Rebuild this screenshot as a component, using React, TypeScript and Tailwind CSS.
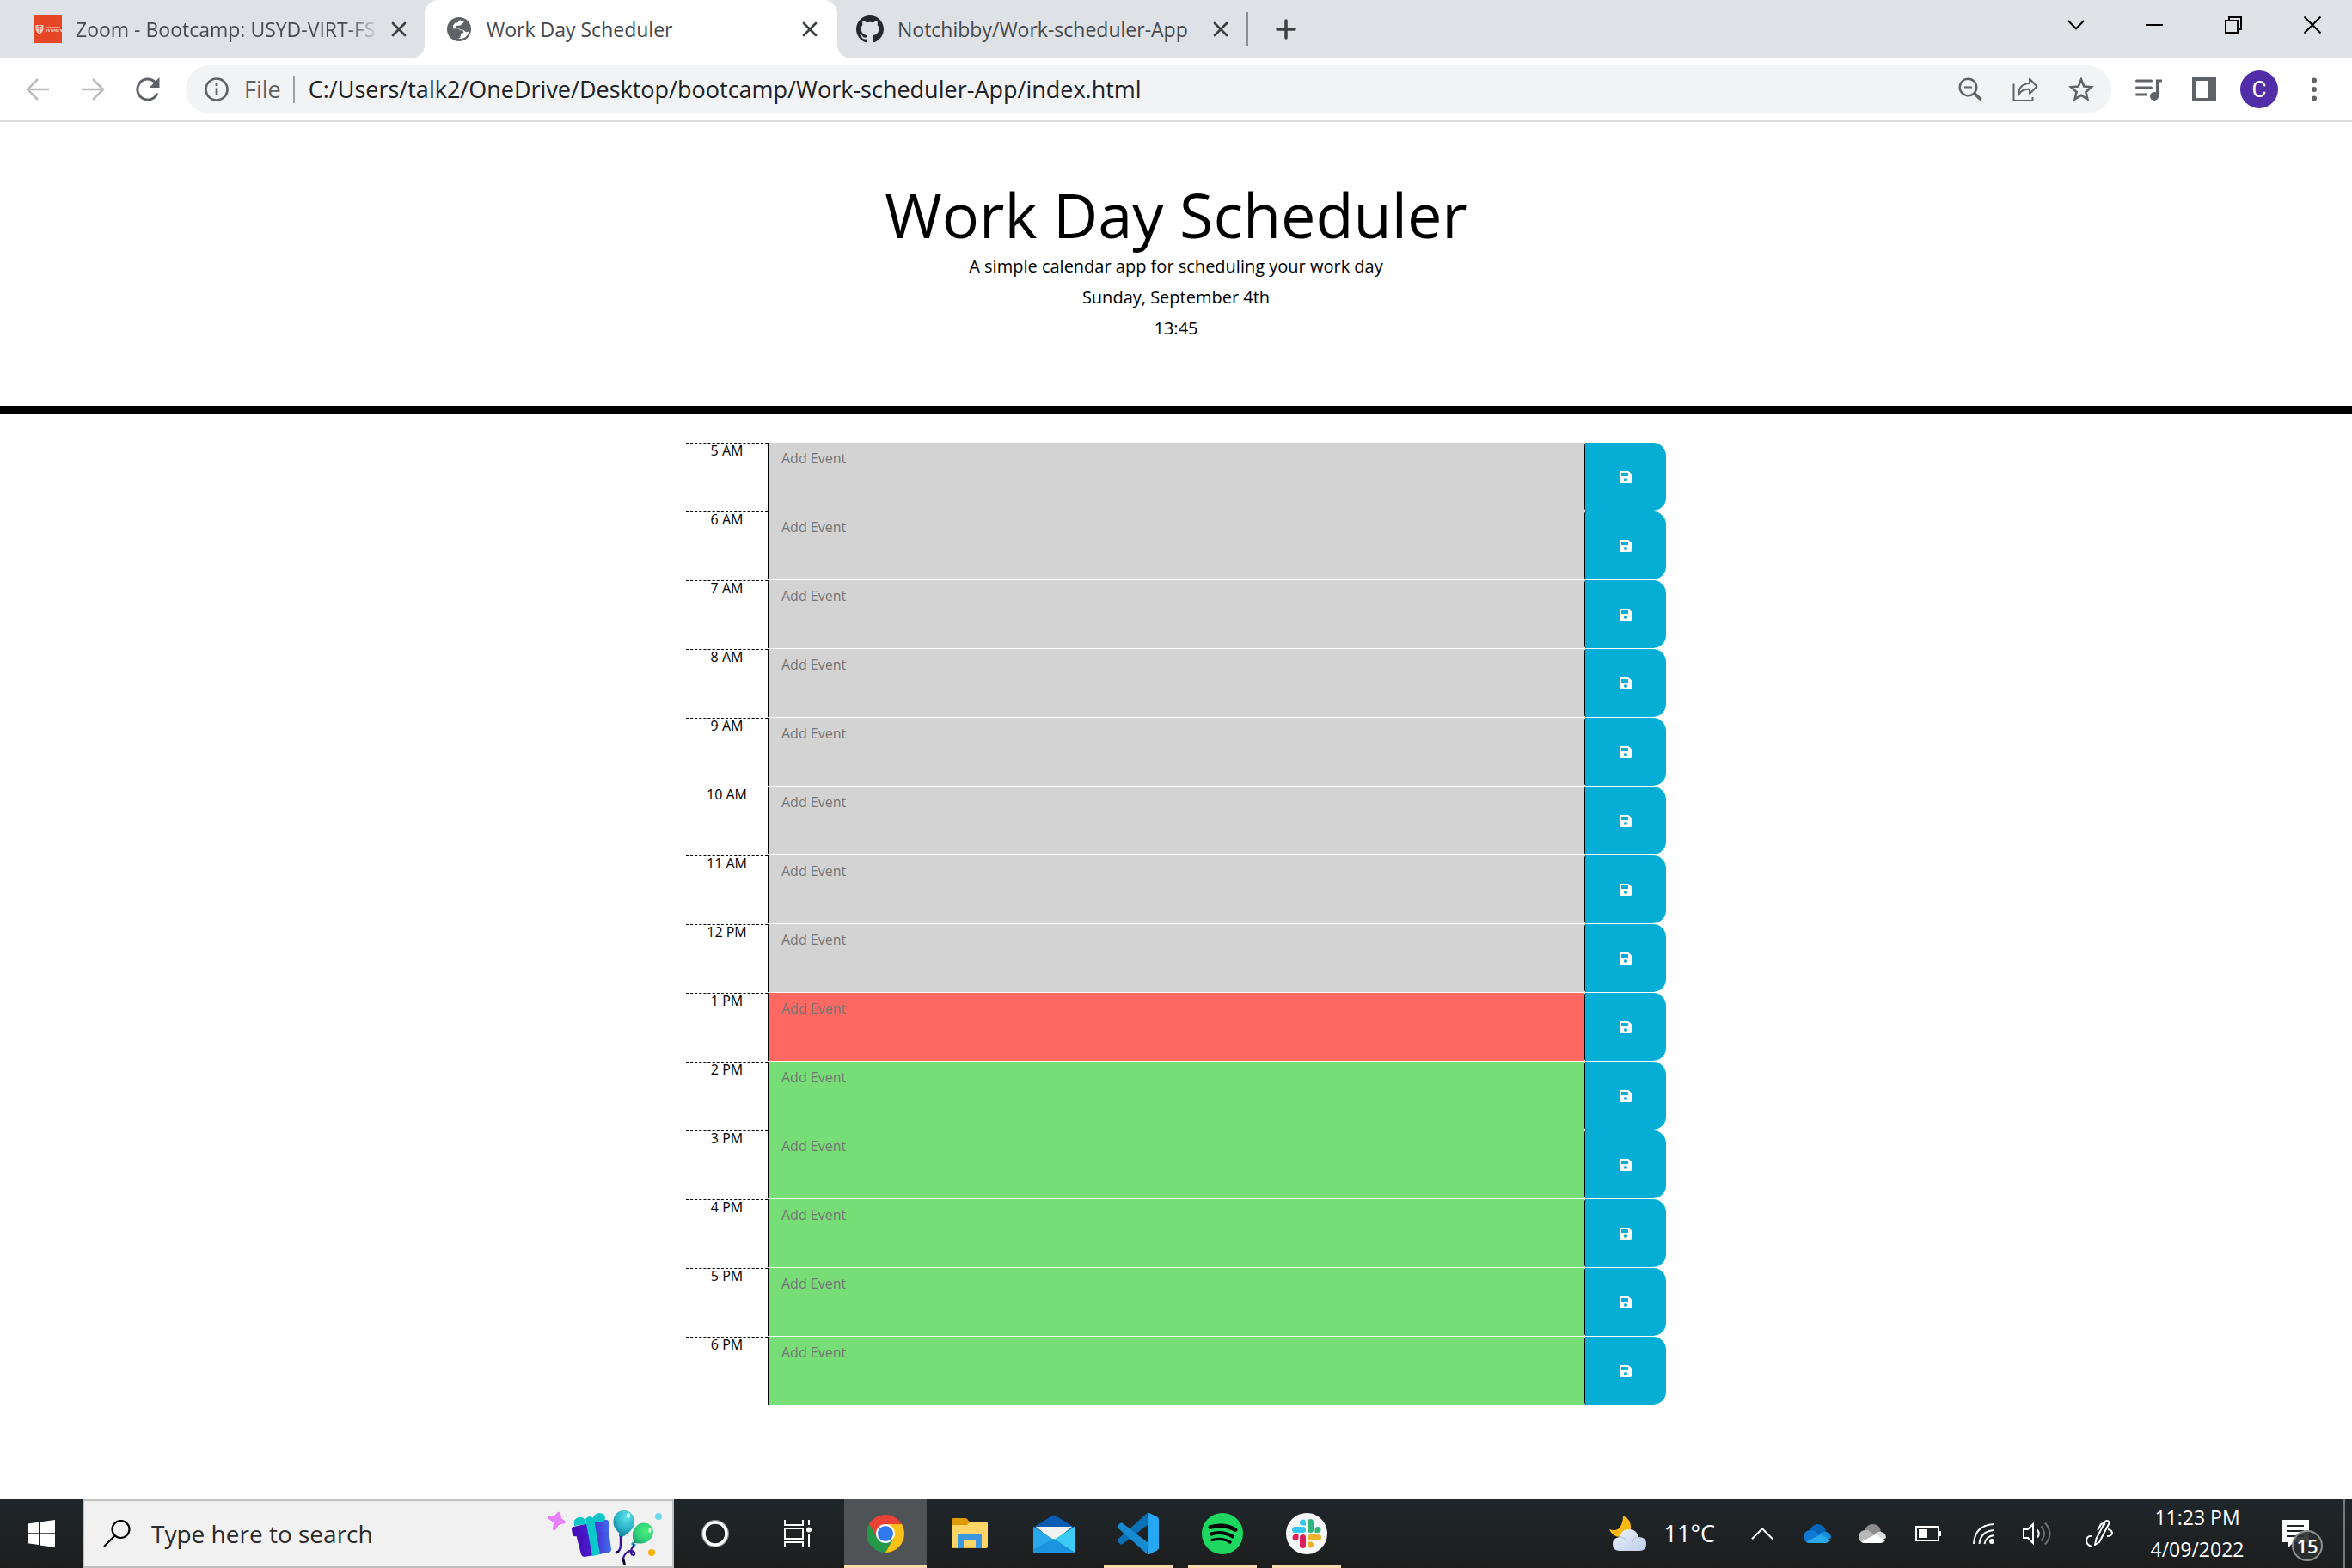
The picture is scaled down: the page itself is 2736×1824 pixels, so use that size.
import React from "react";
import { FaSave } from "react-icons/fa";

const UI = "font-['Open_Sans','Noto_Sans',sans-serif]";

type Phase = "past" | "present" | "future";

const slots: { hour: string; phase: Phase }[] = [
  { hour: "5 AM", phase: "past" },
  { hour: "6 AM", phase: "past" },
  { hour: "7 AM", phase: "past" },
  { hour: "8 AM", phase: "past" },
  { hour: "9 AM", phase: "past" },
  { hour: "10 AM", phase: "past" },
  { hour: "11 AM", phase: "past" },
  { hour: "12 PM", phase: "past" },
  { hour: "1 PM", phase: "present" },
  { hour: "2 PM", phase: "future" },
  { hour: "3 PM", phase: "future" },
  { hour: "4 PM", phase: "future" },
  { hour: "5 PM", phase: "future" },
  { hour: "6 PM", phase: "future" },
];

const phaseColor: Record<Phase, string> = {
  past: "bg-[#d3d3d3]",
  present: "bg-[#ff6961]",
  future: "bg-[#77dd77]",
};

function TabClose({ name }: { name: string }) {
  return (
    <button aria-label={`Close ${name}`} className="flex size-8 shrink-0 items-center justify-center">
      <svg width="18" height="18" viewBox="0 0 18 18" stroke="#3c4043" strokeWidth="2.8" strokeLinecap="round">
        <path d="M2 2l14 14M16 2L2 16" />
      </svg>
    </button>
  );
}

function TabStrip() {
  return (
    <div className="flex h-[68px] items-stretch bg-[#dee1e6] text-[23px] text-[#45494d]">
      <div className="flex w-[494px] items-center pl-10">
        <svg width="32" height="32" viewBox="0 0 32 32">
          <rect width="32" height="32" fill="#e64626" />
          <path d="M1.500 11h9v5q-1 4-4.500 5.500Q2.500 20 1.500 16z" fill="#f7c9bf" />
          <path d="M3 15h6M6 12v8M3.500 12.500h5" stroke="#e64626" strokeWidth="1" />
          <path d="M13 13.500h17" stroke="#f09a86" strokeWidth="1" />
          <text x="12.500" y="19" fontSize="5" fontWeight="700" fill="#fbe3dd" fontFamily="Liberation Serif, serif">SYDNEY</text>
        </svg>
        <span className="ml-4 w-[360px] whitespace-nowrap bg-linear-to-r from-[#45494d] from-88% to-transparent to-98% bg-clip-text text-transparent">
          Zoom - Bootcamp: USYD-VIRT-FS
        </span>
        <TabClose name="Zoom" />
      </div>
      <div className="relative flex w-[480px] items-center rounded-t-2xl bg-white pr-4 pl-[26px]">
        <span className="absolute bottom-0 -left-4 size-4 bg-white"><span className="block size-4 rounded-br-2xl bg-[#dee1e6]" /></span>
        <span className="absolute -right-4 bottom-0 size-4 bg-white"><span className="block size-4 rounded-bl-2xl bg-[#dee1e6]" /></span>
        <svg width="28" height="28" viewBox="0 0 28 28">
          <circle cx="14" cy="14" r="14" fill="#5f6368" />
          <path d="M15 3.200l-3 3.300H9.500L7 9.500v3.700h6.500l1.500 2h3.500l1 2.300-3.500 2.500-.500 3.500-2.500 1 3.500.700q8-2 9-9l-3.500 1.300-2.500-2.500-4.500-.700-1.500-2-3 .2V10l5-.500L20 5.500z" fill="#fff" />
        </svg>
        <span className="ml-[18px] flex-1 whitespace-nowrap">Work Day Scheduler</span>
        <TabClose name="Work Day Scheduler" />
      </div>
      <div className="flex w-[476px] items-center pr-[14px] pl-[22px]">
        <svg width="32" height="32" viewBox="0 0 16 16" fill="#24292f">
          <path d="M8 0C3.580 0 0 3.580 0 8c0 3.540 2.290 6.530 5.470 7.590.4.070.55-.17.55-.38 0-.19-.01-.82-.01-1.490-2.010.37-2.530-.49-2.690-.94-.09-.23-.48-.94-.82-1.130-.28-.15-.68-.52-.01-.53.63-.01 1.080.58 1.230.82.72 1.210 1.870.87 2.330.66.07-.52.28-.87.51-1.070-1.780-.2-3.640-.89-3.640-3.950 0-.87.31-1.590.82-2.150-.08-.2-.36-1.020.08-2.120 0 0 .67-.21 2.200.82.64-.18 1.320-.27 2-.27s1.360.09 2 .27c1.530-1.040 2.200-.82 2.200-.82.44 1.100.16 1.920.08 2.120.51.56.82 1.270.82 2.150 0 3.070-1.870 3.750-3.650 3.950.29.25.54.73.54 1.480 0 1.070-.01 1.930-.01 2.200 0 .21.15.46.55.38A8.010 8.010 0 0 0 16 8c0-4.420-3.580-8-8-8z" />
        </svg>
        <span className="ml-4 flex-1 whitespace-nowrap">Notchibby/Work-scheduler-App</span>
        <TabClose name="Notchibby/Work-scheduler-App" />
      </div>
      <div className="my-[14px] w-[2px] shrink-0 bg-[#8a8d91]" />
      <button aria-label="New tab" className="flex w-[88px] items-center justify-center">
        <svg width="24" height="24" viewBox="0 0 24 24" stroke="#3c4043" strokeWidth="3.500" strokeLinecap="round"><path d="M12 2v20M2 12h20" /></svg>
      </button>
      <div className="ml-auto flex h-[58px]">
        <button aria-label="Search tabs" className="flex w-[90px] items-center justify-center">
          <svg width="20" height="12" viewBox="0 0 20 12" fill="none" stroke="#000" strokeWidth="2"><path d="M.7 1L10 10.300 19.300 1" /></svg>
        </button>
        <button aria-label="Minimize" className="flex w-[92px] items-center justify-center"><span className="h-[2px] w-5 bg-black" /></button>
        <button aria-label="Restore" className="flex w-[92px] items-center justify-center">
          <svg width="20" height="20" viewBox="0 0 20 20" fill="none" stroke="#000" strokeWidth="2"><path d="M1 5h14v14H1zM5 5V1h14v14h-4" /></svg>
        </button>
        <button aria-label="Close window" className="flex w-[92px] items-center justify-center">
          <svg width="20" height="20" viewBox="0 0 20 20" stroke="#000" strokeWidth="2"><path d="M.5.5l19 19M19.500.5l-19 19" /></svg>
        </button>
      </div>
    </div>
  );
}

function Toolbar() {
  return (
    <div className="flex h-[74px] items-center border-b-2 border-[#dcdcdc] bg-white">
      <div className="flex w-[216px] items-center pl-3">
        <button aria-label="Back" className="flex w-16 justify-center">
          <svg width="28" height="28" viewBox="0 0 28 28" fill="none" stroke="#babcbe" strokeWidth="2.600"><path d="M27 14H3M14 2L2 14l12 12" /></svg>
        </button>
        <button aria-label="Forward" className="flex w-16 justify-center">
          <svg width="28" height="28" viewBox="0 0 28 28" fill="none" stroke="#babcbe" strokeWidth="2.600"><path d="M1 14h24M14 2l12 12-12 12" /></svg>
        </button>
        <button aria-label="Reload" className="flex w-16 justify-center">
          <svg width="28" height="28" viewBox="0 0 28 28" fill="none" stroke="#5f6368" strokeWidth="3"><path d="M25 18.500A12 12 0 1 1 22 5.200L25 8" /><path d="M27.500 0v12h-12z" fill="#5f6368" stroke="none" /></svg>
        </button>
      </div>
      <div className="flex h-14 flex-1 items-center rounded-full bg-[#f1f3f4] pr-5 pl-[22px]">
        <svg width="28" height="28" viewBox="0 0 28 28" fill="none" stroke="#5f6368" strokeWidth="2.700"><circle cx="14" cy="14" r="12.500" /><path d="M14 12.500v8M14 7v3" /></svg>
        <span className="ml-[18px] text-[27px] text-[#5f6368]">File</span>
        <span className="ml-[14px] h-8 w-[2px] bg-[#9aa0a6]" />
        <input aria-label="Address" readOnly value="C:/Users/talk2/OneDrive/Desktop/bootcamp/Work-scheduler-App/index.html" className="ml-4 min-w-0 flex-1 bg-transparent text-[27px] text-[#202124] outline-none" />
        <div className="flex items-center gap-[35px]">
          <button aria-label="Zoom">
            <svg width="28" height="28" viewBox="0 0 28 28" fill="none" stroke="#5f6368" strokeWidth="2.400"><circle cx="11.500" cy="11.500" r="9.800" /><path d="M7 11.500h9" strokeWidth="2" /><path d="M18.500 18.500l8 7.500" strokeWidth="3.600" /></svg>
          </button>
          <button aria-label="Share">
            <svg width="30" height="28" viewBox="0 0 30 28" fill="none" stroke="#5f6368" strokeWidth="2"><path d="M1.500 7.500V27H23.500v-4" /><path d="M20 1.800L28.500 10.500 20 19v-5.200Q11 13 7 20.500 7 8 20 6.800z" strokeLinejoin="round" /></svg>
          </button>
          <button aria-label="Bookmark">
            <svg width="30" height="30" viewBox="0 0 30 30" fill="none" stroke="#5f6368" strokeWidth="2.600"><path d="M15 3.500l3.300 8 8.600.7-6.500 5.700 2 8.400L15 21.800l-7.400 4.500 2-8.400-6.500-5.700 8.600-.7z" /></svg>
          </button>
        </div>
      </div>
      <div className="flex w-[280px] items-center pl-7">
        <button aria-label="Media controls">
          <svg width="32" height="28" viewBox="0 0 32 28" fill="none" stroke="#5f6368" strokeWidth="3" strokeLinecap="round"><path d="M1.500 4h17M1.500 12h17M1.500 20h11" /><path d="M25.500 22V4H31" strokeLinecap="butt" /><circle cx="22" cy="22" r="5" fill="#5f6368" stroke="none" /></svg>
        </button>
        <button aria-label="Side panel" className="ml-[34px]">
          <svg width="28" height="28" viewBox="0 0 28 28"><path d="M0 0h28v28H0z" fill="#5f6368" /><path d="M4 4h14v20H4z" fill="#fff" /></svg>
        </button>
        <button aria-label="Profile" className="ml-7 flex size-11 items-center justify-center rounded-full bg-[#512da8] font-['Roboto',sans-serif] text-[26px] text-white">C</button>
        <button aria-label="Menu" className="ml-[39px]">
          <svg width="6" height="28" viewBox="0 0 6 28" fill="#5f6368"><circle cx="3" cy="3.500" r="3" /><circle cx="3" cy="14" r="3" /><circle cx="3" cy="24.500" r="3" /></svg>
        </button>
      </div>
    </div>
  );
}

function Planner() {
  return (
    <main className="mx-auto w-full max-w-[1140px] pt-[33px]">
      {slots.map(({ hour, phase }) => {
        const id = `event-${hour.replace(" ", "-")}`;
        return (
          <div key={hour} className="flex h-20">
            <label htmlFor={id} className="w-[95px] border-t border-dashed border-black text-center text-base leading-4 text-black">{hour}</label>
            <textarea id={id} placeholder="Add Event" className={`mb-px block flex-1 resize-none border-l border-black px-[15px] py-[6px] text-base leading-6 text-black outline-none placeholder:text-[#757575] ${phaseColor[phase]}`} />
            <button aria-label={`Save ${hour}`} className="mb-px flex w-[95px] items-center justify-center rounded-l-[3px] rounded-r-[15px] border-l border-black bg-[#06aed5] text-white"><FaSave size={16} /></button>
          </div>
        );
      })}
    </main>
  );
}

function Party() {
  return (
    <svg width="160" height="76" viewBox="0 2 160 76" fill="none" className="mr-[2px]">
      <defs>
        <linearGradient id="gift" x1="0" x2="1"><stop offset="0" stopColor="#4408b8" /><stop offset=".5" stopColor="#4a22cc" /><stop offset="1" stopColor="#3f6ff0" /></linearGradient>
        <radialGradient id="blueBalloon" cx=".62" cy=".25" r=".85"><stop offset="0" stopColor="#5fe3ea" /><stop offset=".55" stopColor="#2bb5c8" /><stop offset="1" stopColor="#0f6f94" /></radialGradient>
        <radialGradient id="greenBalloon" cx=".65" cy=".4" r=".85"><stop offset="0" stopColor="#4af07a" /><stop offset=".55" stopColor="#2fd07a" /><stop offset="1" stopColor="#128a6a" /></radialGradient>
      </defs>
      <path d="M29 15q2-1 3 1l1 6 4 3q2 2 0 3l-7 2-4 6q-2 1-3-1l1-8-6-4q-2-2 0-3l7-1z" fill="#e681ff" />
      <path d="M49 37l38-7 4 28q0 3-3 4l-28 5q-3 0-4-3z" fill="url(#gift)" />
      <path d="M47 32q-2 0-2 3l1 6q1 3 4 2l36-6q3-1 3-4l-1-7q-1-3-4-2z" fill="url(#gift)" />
      <path d="M62 29q-2-10-9-8-7 2-5 10zM68 26q2-9 9-10 7 0 7 6 0 4-6 5z" fill="#10c5c6" />
      <path d="M61 23q5-6 10 0l7 41-9 2z" fill="#08c8c9" />
      <path d="M103 42c-6-5-10-10-9.500-17C94 18 99 13 106 13s12 6 12 13c0 8-6 12-12 17z" fill="url(#blueBalloon)" />
      <path d="M118 51c-3-7-3-13 1-18 4-6 12-7 17-3 5 4 5 11 1 16-5 6-12 6-19 5z" fill="url(#greenBalloon)" />
      <ellipse cx="111" cy="19" rx="2" ry="3" fill="#c9fbff" /><ellipse cx="136" cy="36" rx="1.500" ry="3" fill="#d6ffe3" />
      <path d="M100 42h5M115 51l4 3" stroke="#168cab" strokeWidth="3" />
      <path d="M102 44q0 6 0 10-1 7-5 8" stroke="#35139a" strokeWidth="2.400" strokeLinecap="round" />
      <path d="M117 54q-5 7-2 10.500 4 1.500 3-2.500-4-4-9 0-6 5-3 13" stroke="#35139a" strokeWidth="2.200" strokeLinecap="round" />
      <path d="M99 61l-2 1M105.500 71l1 4" stroke="#0b0524" strokeWidth="2.600" strokeLinecap="round" />
      <circle cx="146" cy="20" r="4" fill="#6fd9ec" /><circle cx="138" cy="62" r="4" fill="#ffb000" />
    </svg>
  );
}

type AppEntry = { name: string; box: string; bar: string; icon: React.ReactNode };

const systemButtons: AppEntry[] = [
  {
    name: "Cortana", box: "", bar: "",
    icon: <svg width="34" height="34" viewBox="0 0 34 34" fill="none"><circle cx="17" cy="17" r="14.500" stroke="#85898b" strokeWidth="3" /><circle cx="17" cy="17" r="13" stroke="#fff" strokeWidth="3.500" /></svg>,
  },
  {
    name: "Task View", box: "", bar: "",
    icon: <svg width="32" height="32" viewBox="0 0 32 32" fill="none" stroke="#fff" strokeWidth="2"><path d="M1 0v6h21V0M1 32v-6h21v6M1 10h21v12H1zM29 0v6M29 17v15" /><circle cx="29" cy="11.500" r="3" fill="#fff" stroke="none" /></svg>,
  },
];

const apps: AppEntry[] = [
  {
    name: "Google Chrome", box: "bg-[#505355]", bar: "w-full",
    icon: (
      <svg width="44" height="44" viewBox="0 0 44 44">
        <path d="M3 11A22 22 0 0 1 41 11L22 11V22L12.500 27.500z" fill="#ea4335" />
        <path d="M3 11L12.500 27.500 22 22l9.500 5.500L22 44A22 22 0 0 1 3 11z" fill="#26984a" />
        <path d="M41 11A22 22 0 0 1 22 44l9.500-16.500L22 22V11z" fill="#fbc116" />
        <circle cx="22" cy="22" r="11" fill="#fff" /><circle cx="22" cy="22" r="9" fill="#3079ee" />
      </svg>
    ),
  },
  {
    name: "File Explorer", box: "", bar: "",
    icon: <svg width="42" height="36" viewBox="0 0 42 36"><path d="M0 2q0-2 2-2h14q2 0 3 2l2 3v5H0z" fill="#dd9a05" /><path d="M0 8h18l3-4h19q2 0 2 2v27q0 2-2 2H2q-2 0-2-2z" fill="#ffd567" /><path d="M7 35V20q0-2 2-2h24q2 0 2 2v15h-7V25H14v10z" fill="#3a96dd" /><path d="M0 33h7v2H2zM14 33h14v2H14z" fill="#edb73a" /></svg>,
  },
  {
    name: "Mail", box: "", bar: "",
    icon: <svg width="48" height="44" viewBox="0 0 48 44"><path d="M0 15L22 1q2-1 4 0l22 14-4 8H4z" fill="#0a5cb0" /><path d="M3 14h42L24 31z" fill="#f1f1f1" /><path d="M0 14l24 15L0 44z" fill="#28a8ea" /><path d="M48 14L24 29l24 15z" fill="#3ccbf4" /><path d="M0 44V40L24 28l24 16z" fill="#1c95e0" /></svg>,
  },
  {
    name: "Visual Studio Code", box: "", bar: "w-20",
    icon: <svg width="48" height="48" viewBox="0 0 48 48"><path d="M.5 33.500q-1-1.500 0-3L34 .5 36 13 6 36q-1.500 1-3 0z" fill="#0a70b8" /><path d="M.5 14.500q-1 1.500 0 3L34 47.500 36 35 6 12q-1.500-1-3 0z" fill="#168bd2" /><path d="M34 .5q2-1 4 0l8 4q2 1 2 3v33q0 2-2 3l-8 4q-2 1-4 0l2-1.500V2z" fill="#25a7f1" /></svg>,
  },
  {
    name: "Spotify", box: "", bar: "w-20",
    icon: <svg width="48" height="48" viewBox="0 0 48 48" fill="none" stroke="#000" strokeLinecap="round"><circle cx="24" cy="24" r="24" fill="#1ed760" stroke="none" /><path d="M10 16.500q16-4.500 29 3" strokeWidth="4.800" /><path d="M11 24.500q13-4 25 3" strokeWidth="4" /><path d="M12 31.500q12-3 21 2.500" strokeWidth="3.300" /></svg>,
  },
  {
    name: "Slack", box: "", bar: "w-20",
    icon: (
      <svg width="48" height="48" viewBox="0 0 48 48">
        <circle cx="24" cy="24" r="24" fill="#f7f7f7" />
        <path d="M23 14.500V11a3.500 3.500 0 1 0-3.500 3.500zM10.500 16h9a3.500 3.500 0 0 1 0 7h-9a3.500 3.500 0 0 1 0-7z" fill="#36c5f0" />
        <path d="M33.500 23H37a3.500 3.500 0 1 0-3.500-3.500zM25 10.500a3.500 3.500 0 0 1 7 0v9a3.500 3.500 0 0 1-7 0z" fill="#2eb67d" />
        <path d="M25 33.500V37a3.500 3.500 0 1 0 3.500-3.500zM28.500 25h9a3.500 3.500 0 0 1 0 7h-9a3.500 3.500 0 0 1 0-7z" fill="#ecb22e" />
        <path d="M14.500 25H11a3.500 3.500 0 1 0 3.500 3.500zM16 28.500a3.500 3.500 0 0 1 7 0v9a3.500 3.500 0 0 1-7 0z" fill="#e01e5a" />
      </svg>
    ),
  },
];

function AppButton({ app }: { app: AppEntry }) {
  return (
    <button aria-label={app.name} className={`relative flex w-24 items-center justify-center ${app.box}`}>
      {app.icon}
      {app.bar && <span className={`absolute bottom-0 h-1 bg-[#fdd9b0] ${app.bar}`} />}
    </button>
  );
}

function Cloud({ top, left, right, base }: { top: string; left: string; right: string; base: string }) {
  return (
    <svg width="32" height="22" viewBox="0 0 32 22">
      <path d="M7 9Q8 1 16 0q9 0 10 9l-6 7z" fill={top} />
      <path d="M7 7q4-1 7 2l7 5-12 8H7Q0 21 0 14q1-6 7-7z" fill={left} />
      <path d="M18 12q4-4 8-3 6 1 6 7l-5 3z" fill={right} />
      <path d="M3 20.500L20 12l11 7q-2 3-5 3H7q-2 0-4-1.500z" fill={base} />
    </svg>
  );
}

function Taskbar() {
  return (
    <footer className="flex h-20 bg-linear-to-b from-[#1f272b] to-[#1d1d1d] text-white">
      <button aria-label="Start" className="flex w-24 items-center justify-center">
        <svg width="32" height="32" viewBox="0 0 32 32" fill="#fff"><path d="M0 4.500L13 2.700v12.500H0zM14.300 2.500L32 0v15.200H14.300zM0 16.500h13v12.600L0 27.300zM14.300 16.500H32V32l-17.700-2.600z" /></svg>
      </button>
      <label className="flex w-[688px] items-center border-2 border-[#c0c0c0] bg-[#f1f1f1] pl-[22px]">
        <svg width="32" height="32" viewBox="0 0 32 32" fill="none" stroke="#000" strokeWidth="2.200"><circle cx="20.500" cy="11" r="10" /><path d="M13.500 18.500L1 31" /></svg>
        <input aria-label="Search" placeholder="Type here to search" className="ml-6 min-w-0 flex-1 bg-transparent text-[28px] outline-none placeholder:text-[#2b2b2b]" />
        <Party />
      </label>
      <div className="flex">
        {systemButtons.map((a) => <AppButton key={a.name} app={a} />)}
      </div>
      <div className="ml-[6px] flex gap-[2px]">
        {apps.map((a) => <AppButton key={a.name} app={a} />)}
      </div>
      <div className="ml-auto flex items-center">
        <button className="flex items-center gap-5 text-[27px]">
          <svg width="44" height="42" viewBox="0 0 44 42"><defs><linearGradient id="cloud" x1="0" y1="0" x2="1" y2="1"><stop offset="0" stopColor="#eef4ff" /><stop offset="1" stopColor="#bccbe8" /></linearGradient></defs><path d="M16 0q10 5 9 15-2 10-12 10Q4 25 0 16q8 3 12-2 4-5 4-14z" fill="#fdb913" /><path d="M12 41q-8 0-8-8 0-7 8-8 2-9 11-9t11 9q9 0 9 8t-8 8z" fill="url(#cloud)" /><path d="M12 25q6 0 8 5M34 25q-6 0-7 6" stroke="#aebcd8" strokeWidth="1" fill="none" /></svg>
          <span>11°C</span>
        </button>
        <button aria-label="Show hidden icons" className="ml-[42px]"><svg width="26" height="14" viewBox="0 0 26 14" fill="none" stroke="#fff" strokeWidth="2"><path d="M1 13.300L13 1.300l12 12" /></svg></button>
        <button aria-label="OneDrive" className="ml-[35px]"><Cloud top="#0363b8" left="#0f78d4" right="#1490df" base="#28a8ea" /></button>
        <button aria-label="OneDrive personal" className="ml-8"><Cloud top="#8b8b8b" left="#b9b9b9" right="#dedede" base="#ffffff" /></button>
        <button aria-label="Battery" className="ml-[34px]"><svg width="30" height="18" viewBox="0 0 30 18" fill="none" stroke="#fff" strokeWidth="2"><path d="M1 1h26v16H1z" /><path d="M4 4h10v10H4zM28 6h2v6h-2z" fill="#fff" stroke="none" /></svg></button>
        <button aria-label="Network" className="ml-[37px]"><svg width="26" height="26" viewBox="0 0 26 26" fill="none" stroke="#fff" strokeWidth="2"><path d="M1 25Q2 3 25 2M7.500 25Q9 10 25 9M13.500 25Q15 16 25 15" /><circle cx="22" cy="22" r="3" fill="#fff" stroke="none" /></svg></button>
        <button aria-label="Volume" className="ml-8"><svg width="34" height="28" viewBox="0 0 34 28" fill="none" stroke="#fff" strokeWidth="2"><path d="M1 9h5l6-6v22l-6-6H1z" /><path d="M17 9.500q3.500 4.500 0 9" /><path d="M21.500 5.500q7 8.500 0 17M26 1.500q11 12.500 0 25" stroke="#6c7073" /></svg></button>
        <button aria-label="Windows Ink" className="ml-[38px]"><svg width="34" height="34" viewBox="0 0 34 34" fill="none" stroke="#fff" strokeWidth="2"><path d="M12 30l1.500-7L24 3q2-2 4 0 1 1 0 3L17 27z" strokeLinejoin="round" /><path d="M21 7l3-1M22 5q-3 0-4 3l-3 5M9 20q-7-1-7 6 1 5 7 6M27 12q5 1 5 5-1 3-6 3" /></svg></button>
        <button className="ml-8 w-[130px] text-center text-[23px] leading-[37px]">
          <span className="block">11:23 PM</span>
          <span className="block">4/09/2022</span>
        </button>
        <button aria-label="Notifications" className="relative ml-[33px] flex h-20 w-[72px] items-start pt-6">
          <svg width="32" height="32" viewBox="0 0 32 32"><path d="M0 0h32v26H14l-6 6v-6H0z" fill="#fff" /><path d="M6 7h20M6 13h20M6 19h20" stroke="#1d2326" strokeWidth="2" /></svg>
          <span className="absolute top-9 left-3 flex size-9 items-center justify-center rounded-full border-2 border-[#8d8f90] bg-[#2b2d2e]/90 text-[22px] font-semibold">15</span>
        </button>
        <div className="mr-2 h-20 w-[2px] bg-[#76797b]" />
      </div>
    </footer>
  );
}

export default function App() {
  return (
    <div className={`flex min-h-screen flex-col bg-white ${UI}`}>
      <TabStrip />
      <Toolbar />
      <div className="flex-1">
        <header className="border-b-[10px] border-black pt-[71px] pb-[72px] text-center text-black">
          <h1 className="text-7xl leading-[72px]">Work Day Scheduler</h1>
          <div className="mt-[7px] text-xl leading-9">
            <p>A simple calendar app for scheduling your work day</p>
            <p>Sunday, September 4th</p>
            <p>13:45</p>
          </div>
        </header>
        <Planner />
      </div>
      <Taskbar />
    </div>
  );
}
